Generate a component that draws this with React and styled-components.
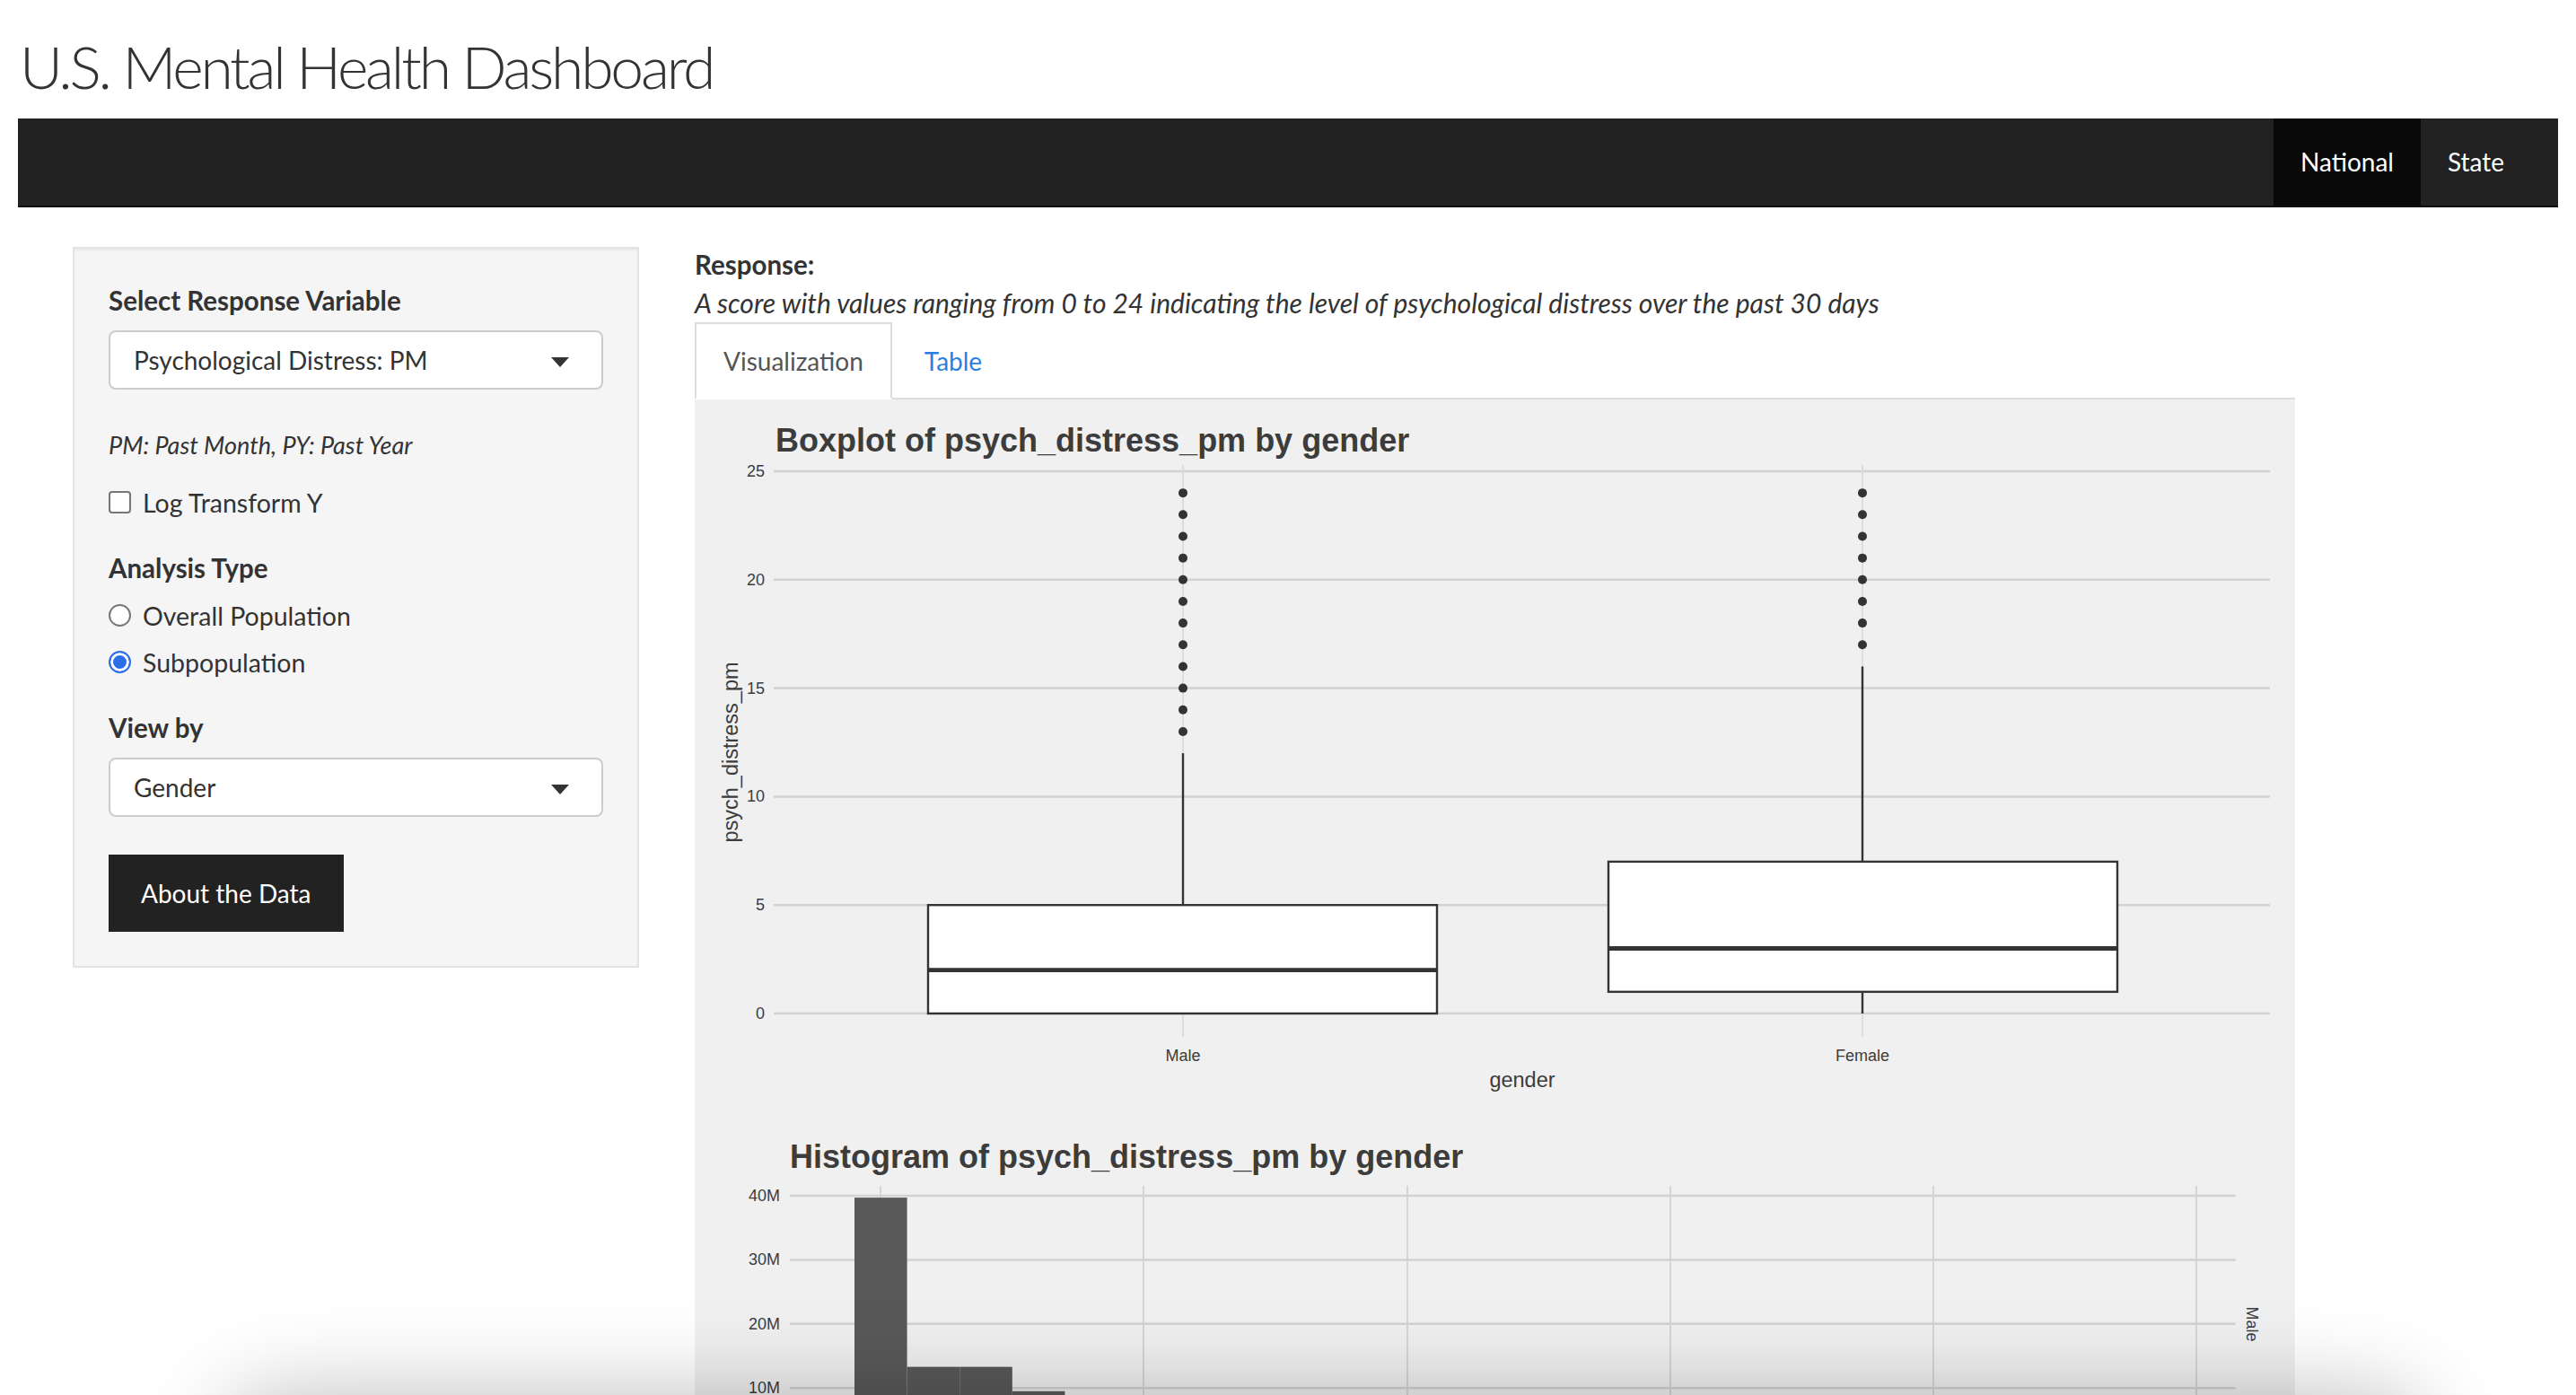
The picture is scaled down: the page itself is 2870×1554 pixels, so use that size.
import styled, { createGlobalStyle } from 'styled-components'

const GlobalStyle = createGlobalStyle`
  * { box-sizing: border-box; }
  body {
    margin: 0;
    background: #fff;
    color: #333;
    font-family: Lato, "Open Sans", sans-serif;
    font-size: 28px;
  }
`

const PLOT_FONT = '"Liberation Sans", Arial, sans-serif'
const INK = '#3c3c3c'
const GRID = '#d2d2d2'

// boxplot scale: value -> y (local svg coords)
const by = v => 684 - v * 24.16
// histogram scale: millions -> y
const hy = v => 92 + (40 - v) * 7.14

const boxGroups = [
  { label: 'Male', cx: 544, x0: 260, x1: 827, lo: 0, q1: 0, med: 2, q3: 5, hi: 12, outliers: [13, 14, 15, 16, 17, 18, 19, 20, 21, 22, 23, 24] },
  { label: 'Female', cx: 1301, x0: 1018, x1: 1585, lo: 0, q1: 1, med: 3, q3: 7, hi: 16, outliers: [17, 18, 19, 20, 21, 22, 23, 24] },
]

const histBins = [39.7, 13.3, 13.3, 9.5, 7, 5.2, 3.8, 2.8, 2.1, 1.6, 1.2, 1, 0.8, 0.6, 0.5, 0.4, 0.35, 0.3, 0.25, 0.2, 0.15, 0.12, 0.1, 0.08, 0.3]

const BoxPlot = () => (
  <PlotSvg width="1783" height="795" viewBox="0 0 1783 795">
    <text x="90" y="58" fontFamily={PLOT_FONT} fontWeight="700" fontSize="36" fill={INK}>
      Boxplot of psych_distress_pm by gender
    </text>
    {[0, 5, 10, 15, 20, 25].map(v => (
      <g key={v}>
        <line x1="88" x2="1755" y1={by(v)} y2={by(v)} stroke={GRID} strokeWidth="2.5" />
        <text x="78" y={by(v)} textAnchor="end" dominantBaseline="central" fontFamily={PLOT_FONT} fontSize="18" fill={INK}>
          {v}
        </text>
      </g>
    ))}
    {boxGroups.map(g => (
      <g key={g.label}>
        <line x1={g.cx} x2={g.cx} y1="73" y2="710" stroke="#d9d9d9" strokeWidth="1.6" />
        <line x1={g.cx} x2={g.cx} y1={by(g.q3)} y2={by(g.hi)} stroke="#333" strokeWidth="2.4" />
        <line x1={g.cx} x2={g.cx} y1={by(g.lo)} y2={by(g.q1)} stroke="#333" strokeWidth="2.4" />
        <rect x={g.x0} y={by(g.q3)} width={g.x1 - g.x0} height={by(g.q1) - by(g.q3)} fill="#fff" stroke="#333" strokeWidth="2.4" />
        <line x1={g.x0} x2={g.x1} y1={by(g.med)} y2={by(g.med)} stroke="#333" strokeWidth="4.8" />
        {g.outliers.map(v => (
          <circle key={v} cx={g.cx} cy={by(v)} r="5" fill="#333" />
        ))}
        <text x={g.cx} y="731" textAnchor="middle" dominantBaseline="central" fontFamily={PLOT_FONT} fontSize="18" fill={INK}>
          {g.label}
        </text>
      </g>
    ))}
    <text x="922" y="758" textAnchor="middle" dominantBaseline="central" fontFamily={PLOT_FONT} fontSize="23.5" fill={INK}>
      gender
    </text>
    <text
      x="40"
      y="393"
      transform="rotate(-90 40 393)"
      textAnchor="middle"
      dominantBaseline="central"
      fontFamily={PLOT_FONT}
      fontSize="23.5"
      fill={INK}
    >
      psych_distress_pm
    </text>
  </PlotSvg>
)

const Histogram = () => (
  <PlotSvg width="1783" height="720" viewBox="0 0 1783 720">
    <text x="106" y="61" fontFamily={PLOT_FONT} fontWeight="700" fontSize="36" fill={INK}>
      Histogram of psych_distress_pm by gender
    </text>
    {[0, 10, 20, 30, 40].map(v => (
      <g key={v}>
        <line x1="106" x2="1717" y1={hy(v)} y2={hy(v)} stroke={GRID} strokeWidth="2.5" />
        <text x="95" y={hy(v)} textAnchor="end" dominantBaseline="central" fontFamily={PLOT_FONT} fontSize="18" fill={INK}>
          {v === 0 ? '0' : `${v}M`}
        </text>
      </g>
    ))}
    {[207, 500, 794, 1087, 1380, 1673].map(x => (
      <line key={x} x1={x} x2={x} y1="81" y2="392" stroke={GRID} strokeWidth="1.8" />
    ))}
    {histBins.map((v, i) => (
      <rect key={i} x={178 + i * 58.6} y={hy(v)} width="58.6" height={hy(0) - hy(v)} fill="#595959" />
    ))}
    <text
      x="1735"
      y="235"
      transform="rotate(90 1735 235)"
      textAnchor="middle"
      dominantBaseline="central"
      fontFamily={PLOT_FONT}
      fontSize="18"
      fill={INK}
    >
      Male
    </text>
  </PlotSvg>
)

export default function App() {
  return (
    <>
      <GlobalStyle />
      <Page>
        <Title>U.S. Mental Health Dashboard</Title>
        <Navbar>
          <NavItem $active>National</NavItem>
          <NavItem>State</NavItem>
        </Navbar>
        <Layout>
          <Well>
            <ControlLabel>Select Response Variable</ControlLabel>
            <Select>Psychological Distress: PM</Select>
            <HelpText>PM: Past Month, PY: Past Year</HelpText>
            <OptionRow $top="24px">
              <CheckBox />
              Log Transform Y
            </OptionRow>
            <ControlLabel $top="33px">Analysis Type</ControlLabel>
            <OptionRow $top="13px">
              <Radio />
              Overall Population
            </OptionRow>
            <OptionRow $top="12px">
              <Radio $checked />
              Subpopulation
            </OptionRow>
            <ControlLabel $top="33px">View by</ControlLabel>
            <Select>Gender</Select>
            <DarkButton>About the Data</DarkButton>
          </Well>
          <Main>
            <ResponseLabel>Response:</ResponseLabel>
            <Description>
              A score with values ranging from 0 to 24 indicating the level of psychological distress over the past 30 days
            </Description>
            <Tabs>
              <Tab $active>Visualization</Tab>
              <Tab>Table</Tab>
            </Tabs>
            <PlotPanel>
              <BoxPlot />
              <Histogram />
            </PlotPanel>
          </Main>
        </Layout>
      </Page>
      <BottomShade />
    </>
  )
}

const Page = styled.div`
  padding: 0 20px;
`

const Title = styled.h1`
  margin: 0;
  padding: 38px 0 0 2px;
  font-size: 66px;
  font-weight: 300;
  line-height: 1.1;
  letter-spacing: -3.2px;
  color: #333;
`

const Navbar = styled.nav`
  display: flex;
  justify-content: flex-end;
  height: 99px;
  margin-top: 21px;
  padding-right: 30px;
  background: #222;
  border-bottom: 2px solid #0c0c0c;
`

const NavItem = styled.div`
  display: flex;
  align-items: center;
  padding: 0 30px;
  color: #fff;
  font-size: 28px;
  background: ${({ $active }) => ($active ? '#090909' : 'transparent')};
`

const Layout = styled.div`
  display: flex;
  align-items: flex-start;
  gap: 62px;
  margin-top: 44px;
  padding-left: 61px;
`

const Well = styled.div`
  display: flex;
  flex-direction: column;
  align-items: flex-start;
  width: 631px;
  padding: 38px;
  background: #f5f5f5;
  border: 2px solid #e3e3e3;
  box-shadow: inset 0 2px 2px rgba(0, 0, 0, 0.05);
`

const ControlLabel = styled.div`
  margin-top: ${({ $top }) => $top || '0'};
  font-size: 29.5px;
  font-weight: 700;
  line-height: 40px;
`

const Select = styled.div`
  position: relative;
  width: 100%;
  height: 66px;
  margin-top: 13px;
  padding: 0 26px;
  display: flex;
  align-items: center;
  background: #fff;
  border: 2px solid #ccc;
  border-radius: 8px;
  font-size: 28px;
  color: #333;

  &::after {
    content: '';
    position: absolute;
    right: 36px;
    top: 28px;
    border-left: 10px solid transparent;
    border-right: 10px solid transparent;
    border-top: 11px solid #333;
  }
`

const HelpText = styled.div`
  margin-top: 42px;
  font-size: 27px;
  font-style: italic;
  line-height: 40px;
  color: #333;
`

const OptionRow = styled.div`
  display: flex;
  align-items: center;
  gap: 13px;
  margin-top: ${({ $top }) => $top};
  font-size: 28.5px;
  line-height: 40px;
`

const CheckBox = styled.span`
  width: 25px;
  height: 25px;
  border: 2px solid #767676;
  border-radius: 4px;
  background: #fff;
`

const Radio = styled.span`
  width: 25px;
  height: 25px;
  border-radius: 50%;
  border: 2px solid ${({ $checked }) => ($checked ? '#2c6ee8' : '#767676')};
  background: ${({ $checked }) => ($checked ? '#2c6ee8' : '#fff')};
  box-shadow: ${({ $checked }) => ($checked ? 'inset 0 0 0 3px #fff' : 'none')};
`

const DarkButton = styled.div`
  margin-top: 42px;
  height: 86px;
  padding: 0 36px;
  display: flex;
  align-items: center;
  background: #222;
  color: #fff;
  font-size: 28px;
`

const Main = styled.div`
  width: 1783px;
  display: flex;
  flex-direction: column;
`

const ResponseLabel = styled.div`
  font-size: 29.5px;
  font-weight: 700;
  line-height: 40px;
`

const Description = styled.div`
  margin-top: 2px;
  font-size: 30px;
  font-style: italic;
  line-height: 40px;
`

const Tabs = styled.div`
  display: flex;
  gap: 4px;
  height: 86px;
  margin-top: 2px;
  border-bottom: 2px solid #ddd;
`

const Tab = styled.div`
  display: flex;
  align-items: center;
  padding: 0 30px;
  margin-bottom: -2px;
  font-size: 28px;
  color: ${({ $active }) => ($active ? '#555' : '#2780e3')};
  background: ${({ $active }) => ($active ? '#fff' : 'transparent')};
  border: 2px solid ${({ $active }) => ($active ? '#ddd' : 'transparent')};
  border-bottom-color: transparent;
`

const PlotPanel = styled.div`
  display: flex;
  flex-direction: column;
  background: #f0f0f0;
`

const PlotSvg = styled.svg`
  display: block;
`

const BottomShade = styled.div`
  position: fixed;
  left: 250px;
  right: 170px;
  bottom: -200px;
  height: 200px;
  border-radius: 60px;
  background: #fff;
  box-shadow: 0 0 100px rgba(0, 0, 0, 0.26);
  pointer-events: none;
`
